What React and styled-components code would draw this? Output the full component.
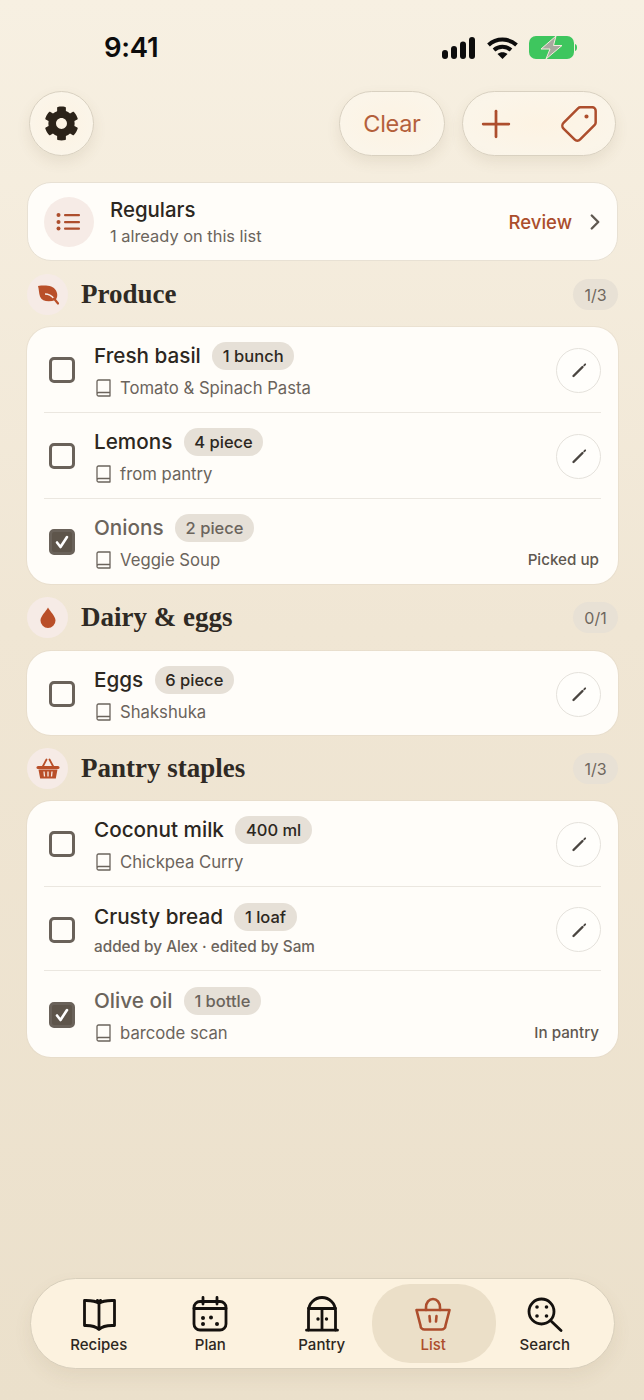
import styled, { createGlobalStyle } from "styled-components";
import { Plus, Tag, ChevronRight } from "lucide-react";
import { FaCog } from "react-icons/fa";

const GlobalStyle = createGlobalStyle`
  html, body {
    margin: 0;
    padding: 0;
  }
  body {
    font-family: Inter, "Noto Sans", sans-serif;
    color: #2c2721;
  }
`;

const Page = styled.div`
  width: 644px;
  height: 1400px;
  box-sizing: border-box;
  padding: 0 26px 31px 27px;
  display: flex;
  flex-direction: column;
  overflow: hidden;
  background: linear-gradient(180deg, #f7f0e2 0%, #f0e6d4 45%, #ebe0cb 100%);
`;

const StatusBar = styled.div`
  height: 91px;
  box-sizing: border-box;
  padding: 33px 41px 0 77px;
  display: flex;
  justify-content: space-between;
  align-items: flex-start;
`;

const Clock = styled.span`
  font-size: 27.5px;
  line-height: 29px;
  font-weight: 600;
  letter-spacing: -0.3px;
  color: #0c0c0c;
`;

const StatusIcons = styled.div`
  display: flex;
  align-items: center;
  gap: 11.5px;
  margin-top: 3px;
`;

const Toolbar = styled.div`
  height: 65px;
  padding: 0 2px;
  display: flex;
  justify-content: space-between;
`;

const ToolGroup = styled.div`
  display: flex;
  gap: 17px;
`;

const GlassButton = styled.button`
  height: 65px;
  width: ${(p) => p.$w}px;
  box-sizing: border-box;
  padding: 0;
  border: 1px solid #d9d1c1;
  border-radius: 33px;
  background: radial-gradient(ellipse at center, #fdf3e3 0%, #fbf5e9 70%, #f9f3e7 100%);
  box-shadow: 0 6px 14px rgba(110, 85, 50, 0.1);
  display: flex;
  align-items: center;
  justify-content: center;
  font-family: inherit;
  font-size: 23.5px;
  letter-spacing: -0.3px;
  color: #b4603b;
`;

const AddGroup = styled(GlassButton)`
  justify-content: space-between;
  padding: 0 16px 0 11px;
  color: #ad4e2d;
`;

const RegularsCard = styled.div`
  margin-top: 26px;
  height: 79px;
  box-sizing: border-box;
  padding: 0 9px 0 16px;
  display: flex;
  align-items: center;
  gap: 16px;
  background: #fffdf9;
  border: 1px solid #e8e1d4;
  border-radius: 24px;
`;

const IconCircle = styled.div`
  width: ${(p) => p.$size}px;
  height: ${(p) => p.$size}px;
  flex: none;
  border-radius: 50%;
  background: #f6ebe6;
  display: flex;
  align-items: center;
  justify-content: center;
`;

const RegularsText = styled.div`
  flex: 1;
  display: flex;
  flex-direction: column;
  gap: 4px;
`;

const RegularsTitle = styled.span`
  font-size: 20.4px;
  line-height: 25px;
  font-weight: 500;
`;

const RegularsSub = styled.span`
  font-size: 16.4px;
  line-height: 21px;
  color: #6b645c;
`;

const ReviewLink = styled.div`
  display: flex;
  align-items: center;
  gap: 10px;
  font-size: 18.5px;
  font-weight: 500;
  color: #ab4e2c;
  svg {
    color: #5f5850;
  }
`;

const SectionHead = styled.div`
  margin-top: 13px;
  height: 41px;
  display: flex;
  align-items: center;
  gap: 13px;
`;

const SectionTitle = styled.h2`
  flex: 1;
  margin: 0;
  font-family: "Liberation Serif", serif;
  font-size: 27px;
  font-weight: 700;
  color: #2f2a24;
`;

const CountPill = styled.span`
  width: 45px;
  height: 31px;
  border-radius: 16px;
  background: #e8e1d5;
  color: #6f675e;
  font-size: 16px;
  display: flex;
  align-items: center;
  justify-content: center;
`;

const ListCard = styled.div`
  margin-top: ${(p) => p.$gap}px;
  background: #fffdf9;
  border-radius: 24px;
  box-shadow: 0 0 0 1px rgba(225, 216, 200, 0.5);
`;

const Row = styled.div`
  padding: ${(p) => p.$top}px 17px ${(p) => p.$bottom}px 22px;
  display: flex;
  align-items: center;
  gap: 19px;
`;

const Divider = styled.div`
  height: 1px;
  margin: 0 17px;
  background: #ebe7e0;
`;

const CheckBox = styled.span`
  width: 26px;
  height: 26px;
  flex: none;
  margin-top: -1px;
  box-sizing: border-box;
  border: 3px solid #6a625a;
  border-radius: 5px;
  background: ${(p) => (p.$checked ? "#5e554b" : "transparent")};
  display: flex;
  align-items: center;
  justify-content: center;
`;

const RowBody = styled.div`
  flex: 1;
  min-width: 0;
`;

const NameLine = styled.div`
  height: 28px;
  display: flex;
  align-items: center;
  gap: 11.5px;
`;

const ItemName = styled.span`
  margin-top: -2px;
  font-size: 20.7px;
  font-weight: 500;
  color: ${(p) => (p.$done ? "#6b645c" : "#2c2721")};
`;

const QtyPill = styled.span`
  height: 28px;
  padding: 0 10.5px;
  border-radius: 14px;
  background: #e6e0d7;
  font-size: 16.5px;
  font-weight: 500;
  color: ${(p) => (p.$done ? "#6b645c" : "#2c2721")};
  display: flex;
  align-items: center;
`;

const SubLine = styled.div`
  margin-top: 7px;
  height: 22px;
  display: flex;
  align-items: center;
  gap: 8px;
  padding-left: 1px;
  font-size: 16.7px;
  color: #6b645c;
`;

const ByLine = styled.div`
  margin-top: 6px;
  height: 20px;
  line-height: 20px;
  font-size: 15.3px;
  font-weight: 500;
  color: #6b645c;
`;

const EditButton = styled.button`
  width: 45px;
  height: 45px;
  flex: none;
  margin-top: -1px;
  padding: 0;
  border: 1px solid #e5e2dc;
  border-radius: 50%;
  background: #fffefb;
  display: flex;
  align-items: center;
  justify-content: center;
`;

const RowStatus = styled.span`
  align-self: flex-end;
  margin-right: 2px;
  line-height: 22px;
  font-size: 15.2px;
  font-weight: 500;
  color: #5f5850;
`;

const TabBar = styled.nav`
  margin-top: auto;
  margin-left: 3px;
  width: 585px;
  height: 91px;
  box-sizing: border-box;
  padding: 17px 12px 0;
  border: 1px solid #d8cfbc;
  border-radius: 46px;
  background: #fcf2df;
  box-shadow: 0 8px 18px rgba(110, 85, 50, 0.08);
  display: grid;
  grid-template-columns: repeat(5, 111.5px);
`;

const TabItem = styled.div`
  position: relative;
  display: flex;
  flex-direction: column;
  align-items: center;
  gap: 4px;
  color: ${(p) => (p.$active ? "#ad4e2d" : "#14110e")};

  &::before {
    content: "";
    display: ${(p) => (p.$active ? "block" : "none")};
    position: absolute;
    top: -12px;
    left: -6px;
    width: 124px;
    height: 79px;
    border-radius: 38px;
    background: #ebdfc8;
  }
  svg,
  span {
    position: relative;
  }
`;

const TabLabel = styled.span`
  font-size: 15px;
  line-height: 18px;
  font-weight: 500;
  color: ${(p) => (p.$active ? "#ad4e2d" : "#2c2721")};
`;

function SignalIcon() {
  return (
    <svg width="33" height="22" viewBox="0 0 33 22">
      <rect x="0" y="13" width="6" height="9" rx="3" fill="#0c0c0c" />
      <rect x="9" y="9" width="6" height="13" rx="3" fill="#0c0c0c" />
      <rect x="18" y="4.5" width="6" height="17.5" rx="3" fill="#0c0c0c" />
      <rect x="27" y="0" width="6" height="22" rx="3" fill="#0c0c0c" />
    </svg>
  );
}

function WifiIcon() {
  return (
    <svg width="31" height="22" viewBox="0 0 31 22" fill="none" stroke="#0c0c0c" strokeWidth="4">
      <path d="M1.5 8C9.5 .8 21.5 .8 29.5 8" />
      <path d="M7 13C12 8.8 19 8.8 24 13" />
      <path d="M15.5 22L10.5 17C13.5 14.8 17.5 14.8 20.5 17Z" fill="#0c0c0c" stroke="none" />
    </svg>
  );
}

function BatteryIcon() {
  return (
    <svg width="48" height="23" viewBox="0 0 48 23">
      <rect x="0" y="0" width="45" height="23" rx="7" fill="#3ec65e" />
      <path d="M46 8c1.5.4 2 1.8 2 3.5s-.5 3.1-2 3.5Z" fill="#3ec65e" />
      <path d="M27 0L12 13H21L17 23L33 9.5H24.5Z" fill="#a9a99f" stroke="#f5ecdd" strokeWidth="1" />
    </svg>
  );
}

function ListIcon() {
  return (
    <svg width="26" height="20" viewBox="0 0 26 20" fill="#ad4e2d">
      <circle cx="2.5" cy="3" r="2" />
      <circle cx="2.5" cy="10" r="2" />
      <circle cx="2.5" cy="16.5" r="2" />
      <rect x="8" y="2" width="16" height="2.2" rx="1" />
      <rect x="8" y="9" width="16" height="2.2" rx="1" />
      <rect x="8" y="15.5" width="16" height="2.2" rx="1" />
    </svg>
  );
}

function LeafIcon() {
  return (
    <svg width="22" height="20" viewBox="0 0 22 20" fill="none">
      <path d="M1 1C9 0 16 .5 19 5.5C21 9.5 20.5 12.5 18.5 15C12 17.5 5 16.5 3 11.5C1.8 8 2 4 1 1Z" fill="#b94f29" />
      <path d="M8 9C11 9 14.500 10.500 17 13.500" stroke="#f6ebe6" strokeWidth="1.4" />
      <path d="M17 13.5L21 18.5" stroke="#b94f29" strokeWidth="2.2" strokeLinecap="round" />
    </svg>
  );
}

function DropIcon() {
  return (
    <svg width="16" height="21" viewBox="0 0 16 21">
      <path d="M8 .5C10 4.5 15.5 9 15.5 13.5A7.5 7.5 0 0 1 .5 13.5C.5 9 6 4.5 8 .5Z" fill="#b94f29" />
    </svg>
  );
}

function BasketIcon() {
  return (
    <svg width="24" height="21" viewBox="0 0 24 21" fill="none">
      <path d="M6.5 9L10.5 1.5M17.5 9L13.5 1.5" stroke="#b94f29" strokeWidth="1.8" strokeLinecap="round" />
      <rect x="0.5" y="8" width="23" height="3" rx="1.5" fill="#b94f29" />
      <path d="M2.5 11.5H21.5L19.8 20.5H4.2Z" fill="#b94f29" />
      <path d="M8 13.5L8.5 18.5M12 13.5V18.5M16 13.5L15.5 18.5" stroke="#f6ebe6" strokeWidth="1.3" />
    </svg>
  );
}

function BookIcon() {
  return (
    <svg width="17" height="18" viewBox="0 0 17 18" fill="none" stroke="#6b645c" strokeWidth="1.3" strokeLinejoin="round" style={{ flex: "none" }}>
      <path d="M2 14.5V2.5A1.5 1.5 0 0 1 3.5 1H15V13.5H3.5A1.5 1.5 0 0 0 2 15V15.5A1.5 1.5 0 0 0 3.5 17H15V13.5" />
    </svg>
  );
}

function PencilIcon() {
  return (
    <svg width="24" height="24" viewBox="0 0 24 24" fill="none" stroke="#4a4540" strokeLinecap="round">
      <path d="M6.5 18L15.5 9" strokeWidth="2.4" />
      <path d="M17.2 7.3L18.2 6.3" strokeWidth="1.8" />
    </svg>
  );
}

function CheckMark() {
  return (
    <svg width="16" height="16" viewBox="0 0 16 16" fill="none" stroke="#fff" strokeWidth="2.6" strokeLinecap="round" strokeLinejoin="round">
      <path d="M3 8.5L6.5 13L13 3" />
    </svg>
  );
}

function RecipesIcon() {
  return (
    <svg width="36" height="36" viewBox="0 0 36 36" fill="none" stroke="currentColor" strokeWidth="2.8" strokeLinejoin="round">
      <path d="M18 7.5C15 5 10 4.5 5 4.5H3.5V29.5H5C10 29.5 15 30.5 18 33.5C21 30.5 26 29.5 31 29.5H33.5V4.5H31C26 4.5 21 5 18 7.5ZM18 7.5V33" />
      <path d="M18 8L14.8 4.5C15.5 2.5 17.5 2.8 18 4C18.5 2.8 20.5 2.5 21.2 4.5Z" fill="currentColor" stroke="none" />
    </svg>
  );
}

function PlanIcon() {
  return (
    <svg width="36" height="36" viewBox="0 0 36 36" fill="none" stroke="currentColor" strokeWidth="2.8" strokeLinecap="round">
      <rect x="2" y="5.5" width="32" height="28.5" rx="6" />
      <path d="M2 12.5H34M11 1.5V8M25 1.5V8" />
      <g fill="currentColor" stroke="none">
        <circle cx="11" cy="22" r="2" />
        <circle cx="19" cy="21.5" r="2" />
        <circle cx="11" cy="28" r="2" />
        <circle cx="25" cy="28" r="2" />
      </g>
    </svg>
  );
}

function PantryIcon() {
  return (
    <svg width="36" height="36" viewBox="0 0 36 36" fill="none" stroke="currentColor" strokeWidth="2.8" strokeLinecap="round">
      <path d="M4.5 34V15A13.5 13.5 0 0 1 31.5 15V34" />
      <path d="M4.5 12.5H31.5M18 12.5V34M2.5 34.2H33.5" />
      <g fill="currentColor" stroke="none">
        <circle cx="14" cy="23" r="1.7" />
        <circle cx="22.5" cy="23" r="1.7" />
      </g>
    </svg>
  );
}

function BasketTabIcon() {
  return (
    <svg width="36" height="36" viewBox="0 0 36 36" fill="none" stroke="currentColor" strokeWidth="2.6" strokeLinecap="round" strokeLinejoin="round">
      <path d="M1.5 14H34.5L30.5 29.5A4 4 0 0 1 26.5 33.5H9.5A4 4 0 0 1 5.5 29.5Z" />
      <path d="M11 14V11.5C11 6.5 14 3 18 3C22 3 25 6.5 25 11.5V14" />
      <path d="M14.5 20L15 25.5M21.5 20L21 25.5" />
    </svg>
  );
}

function SearchIcon() {
  return (
    <svg width="36" height="36" viewBox="0 0 36 36" fill="none" stroke="currentColor" strokeWidth="2.8" strokeLinecap="round">
      <circle cx="14.5" cy="15.5" r="12.5" />
      <path d="M24 25L34 34.5" />
      <g fill="currentColor" stroke="none">
        <circle cx="10" cy="11" r="1.8" />
        <circle cx="19.5" cy="11" r="1.8" />
        <circle cx="10" cy="20" r="1.8" />
        <circle cx="19.5" cy="20" r="1.8" />
      </g>
    </svg>
  );
}

const sections = [
  {
    title: "Produce",
    count: "1/3",
    gap: 12,
    icon: <LeafIcon />,
    items: [
      { name: "Fresh basil", qty: "1 bunch", note: "Tomato & Spinach Pasta", top: 15, bottom: 13 },
      { name: "Lemons", qty: "4 piece", note: "from pantry", top: 15, bottom: 13 },
      { name: "Onions", qty: "2 piece", note: "Veggie Soup", top: 15, bottom: 13, status: "Picked up" },
    ],
  },
  {
    title: "Dairy & eggs",
    count: "0/1",
    gap: 13,
    icon: <DropIcon />,
    items: [{ name: "Eggs", qty: "6 piece", note: "Shakshuka", top: 15, bottom: 12 }],
  },
  {
    title: "Pantry staples",
    count: "1/3",
    gap: 12,
    icon: <BasketIcon />,
    items: [
      { name: "Coconut milk", qty: "400 ml", note: "Chickpea Curry", top: 15, bottom: 13 },
      { name: "Crusty bread", qty: "1 loaf", by: "added by Alex · edited by Sam", top: 16, bottom: 13 },
      { name: "Olive oil", qty: "1 bottle", note: "barcode scan", top: 16, bottom: 13, status: "In pantry" },
    ],
  },
];

const tabs = [
  { label: "Recipes", icon: <RecipesIcon /> },
  { label: "Plan", icon: <PlanIcon /> },
  { label: "Pantry", icon: <PantryIcon /> },
  { label: "List", icon: <BasketTabIcon />, active: true },
  { label: "Search", icon: <SearchIcon /> },
];

function ListRow({ item }) {
  const done = Boolean(item.status);
  return (
    <Row $top={item.top} $bottom={item.bottom}>
      <CheckBox $checked={done}>{done && <CheckMark />}</CheckBox>
      <RowBody>
        <NameLine>
          <ItemName $done={done}>{item.name}</ItemName>
          <QtyPill $done={done}>{item.qty}</QtyPill>
        </NameLine>
        {item.by ? (
          <ByLine>{item.by}</ByLine>
        ) : (
          <SubLine>
            <BookIcon />
            {item.note}
          </SubLine>
        )}
      </RowBody>
      {done ? (
        <RowStatus>{item.status}</RowStatus>
      ) : (
        <EditButton>
          <PencilIcon />
        </EditButton>
      )}
    </Row>
  );
}

export default function App() {
  return (
    <Page>
      <GlobalStyle />
      <StatusBar>
        <Clock>9:41</Clock>
        <StatusIcons>
          <SignalIcon />
          <WifiIcon />
          <BatteryIcon />
        </StatusIcons>
      </StatusBar>

      <Toolbar>
        <GlassButton $w={65}>
          <FaCog size={35} color="#2c2319" />
        </GlassButton>
        <ToolGroup>
          <GlassButton $w={106}>Clear</GlassButton>
          <AddGroup $w={154}>
            <Plus size={44} strokeWidth={1.5} />
            <Tag size={40} strokeWidth={1.5} style={{ transform: "rotate(90deg)" }} />
          </AddGroup>
        </ToolGroup>
      </Toolbar>

      <RegularsCard>
        <IconCircle $size={50}>
          <ListIcon />
        </IconCircle>
        <RegularsText>
          <RegularsTitle>Regulars</RegularsTitle>
          <RegularsSub>1 already on this list</RegularsSub>
        </RegularsText>
        <ReviewLink>
          Review
          <ChevronRight size={26} strokeWidth={2.2} />
        </ReviewLink>
      </RegularsCard>

      {sections.map((section) => (
        <div key={section.title}>
          <SectionHead>
            <IconCircle $size={41}>{section.icon}</IconCircle>
            <SectionTitle>{section.title}</SectionTitle>
            <CountPill>{section.count}</CountPill>
          </SectionHead>
          <ListCard $gap={section.gap}>
            {section.items.map((item, i) => (
              <div key={item.name}>
                {i > 0 && <Divider />}
                <ListRow item={item} />
              </div>
            ))}
          </ListCard>
        </div>
      ))}

      <TabBar>
        {tabs.map((tab) => (
          <TabItem key={tab.label} $active={tab.active}>
            {tab.icon}
            <TabLabel $active={tab.active}>{tab.label}</TabLabel>
          </TabItem>
        ))}
      </TabBar>
    </Page>
  );
}
